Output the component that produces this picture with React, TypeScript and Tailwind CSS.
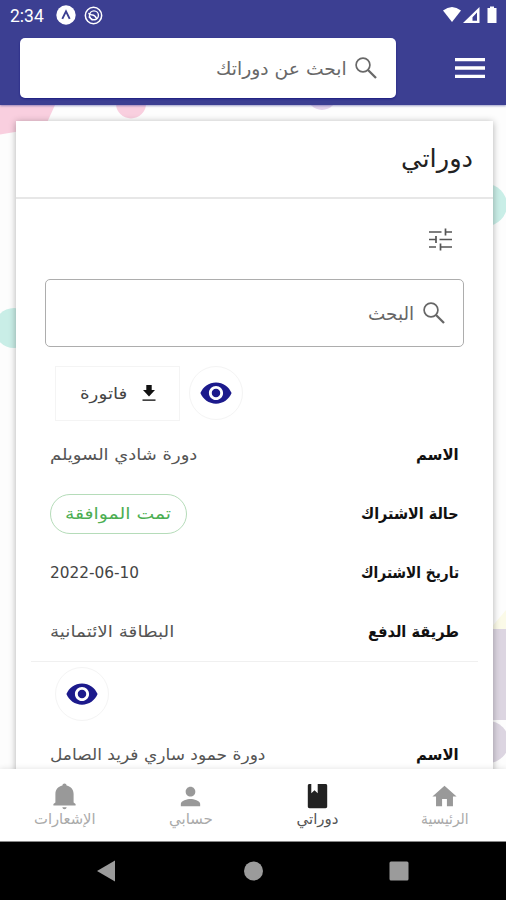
import { useLayoutEffect, useRef, useState } from "react";
import type { ReactNode } from "react";
import { MdHome, MdMenu, MdPerson, MdVisibility } from "react-icons/md";

/** A single line of text condensed or widened to a fixed width. */
function Fit({ w, className = "", children }: { w: number; className?: string; children: ReactNode }) {
  const ref = useRef<HTMLSpanElement>(null);
  const [scale, setScale] = useState(1);
  useLayoutEffect(() => {
    if (ref.current) setScale(w / ref.current.offsetWidth);
  }, [w]);
  return (
    <span className={`flex shrink-0 justify-start ${className}`} style={{ width: w }}>
      <span ref={ref} className="shrink-0 origin-right whitespace-nowrap" style={{ transform: `scaleX(${scale})` }}>
        {children}
      </span>
    </span>
  );
}

function SearchIcon({ className }: { className: string }) {
  return (
    <svg className={className} viewBox="0 0 22 22" fill="none" stroke="currentColor">
      <circle cx="8" cy="8" r="6.900" strokeWidth="1.700" />
      <path d="m13 13 8 8" strokeWidth="2.300" />
    </svg>
  );
}

function TuneIcon() {
  return (
    <svg className="h-[23px] w-[23px] text-[#555]" viewBox="0 0 23 23" fill="none" stroke="currentColor" strokeWidth="1.700">
      <path d="M0 4h12.500M16.500 4H23M16.500 .5v7M0 11.500h7M7 8v7M10.500 11.500H23M0 19h7M11.500 19H23M11.500 15.500v7" />
    </svg>
  );
}

function BellIcon({ className }: { className: string }) {
  return (
    <svg className={className} viewBox="0 0 29 29" fill="currentColor">
      <path d="M14.500 1.500c1.200 0 2 .8 2.100 2.100 4.600 1 7 4.300 7 8.400v8.400l2 1.600v1.500H3.400V22l2-1.600V12c0-4.100 2.400-7.400 7-8.400.1-1.300.9-2.100 2.100-2.100ZM12.300 25.300h4.400c-.3 1.300-1 2-2.200 2s-1.900-.7-2.200-2Z" />
    </svg>
  );
}

function BookIcon({ className }: { className: string }) {
  return (
    <svg className={className} viewBox="0 0 29 29" fill="currentColor">
      <path d="M6.500 2h1.800v9.300l3.200-3 3.200 3V2h7.800c1 0 1.700.7 1.700 1.700v20.800c0 1-.7 1.700-1.700 1.700h-16c-1 0-1.700-.7-1.700-1.700V3.700C4.800 2.700 5.500 2 6.500 2Z" />
    </svg>
  );
}

function StatusBar() {
  return (
    <div dir="ltr" className="flex h-[30px] items-center justify-between pl-[10px] pr-[8px] text-white">
      <div className="flex items-center">
        <span className="w-[46px] pt-[3px] font-[Roboto,sans-serif] text-[17.5px] leading-none">2:34</span>
        <svg className="size-5" viewBox="0 0 20 20">
          <circle cx="10" cy="10" r="9.7" fill="#fff" />
          <path d="M6.3 13.8 10 6.4l3.7 7.4" fill="none" stroke="#3c3f92" strokeWidth="1.9" />
        </svg>
        <svg className="ml-2 size-[19px]" viewBox="0 0 20 20" fill="none" stroke="#fff">
          <circle cx="10" cy="10" r="8.600" strokeWidth="1.600" />
          <circle cx="10.500" cy="9.800" r="4.700" strokeWidth="1.500" />
          <path d="M4.500 8c2 0 2.500 1.500 4.500 1.500S12 11 13.500 13.500M5 11l4 4" strokeWidth="1.600" />
        </svg>
      </div>
      <svg className="h-[18px] w-[56px]" viewBox="0 0 56 18" fill="#fff">
        <path d="M1 4.500Q10 -2.500 19 4.500L10 16Z" />
        <path fillRule="evenodd" d="M21 17 37.500 1v16ZM30.500 14.800H35V6.500l-4.500 4.700Z" />
        <path d="M45.500 2H48V.5h4V2h2.500v15h-9Z" />
      </svg>
    </div>
  );
}

function Header() {
  return (
    <header className="z-10 h-[105px] shrink-0 bg-[#3c3f92] shadow-[0_1px_2px_#3c3f9280]">
      <StatusBar />
      <div className="flex items-center pr-[16px] pt-[8px]">
        <MdMenu className="size-[40px] shrink-0 text-white" />
        <div className="mr-[54px] flex h-[60px] w-[376px] items-center rounded-[5px] bg-white pr-[19px] text-[#686868] shadow-[0_1px_2px_#1c1c80]">
          <SearchIcon className="size-[22px]" />
          <Fit w={131} className="mr-[8px] text-[18px]">ابحث عن دوراتك</Fit>
        </div>
      </div>
    </header>
  );
}

function Backdrop() {
  return (
    <svg className="absolute inset-0 h-[664px] w-[506px]" viewBox="0 105 506 664">
      <path d="M0 105H55L45 127 0 134.500Z" fill="#f9cfdf" />
      <circle cx="131" cy="103.500" r="15" fill="#f9cfdf" />
      <circle cx="322" cy="95" r="15" fill="#e5d4eb" />
      <circle cx="486" cy="205" r="21" fill="#c9eee7" />
      <circle cx="14" cy="328" r="20" fill="#c9eee7" />
      <path d="M506 610 490 629h16Z" fill="#fbfae8" />
      <path d="M490 629h16v91h-16Z" fill="#dcd5e1" />
      <circle cx="488" cy="742" r="21" fill="#dcd5e1" />
    </svg>
  );
}

function ViewButton() {
  return (
    <button className="flex size-[54px] items-center justify-center rounded-full border border-[#f4f4f4] text-[#1c1a8c]">
      <MdVisibility className="size-[34px]" />
    </button>
  );
}

function Row({ label, labelWidth, children }: { label: string; labelWidth: number; children: ReactNode }) {
  return (
    <div className="flex h-[58.800px] items-center justify-between pl-[34px] pr-[34px]">
      <Fit w={labelWidth} className="text-[16px] font-bold text-[#111]">{label}</Fit>
      {children}
    </div>
  );
}

function CourseCard() {
  return (
    <main className="relative mr-[13px] h-[660px] w-[477px] bg-white shadow-[0_1px_7px_#00000050]">
      <h1 className="flex h-[78px] items-center border-b-2 border-[#e7e7e7] pr-[20px] text-[#222]">
        <Fit w={72} className="text-[25px]">دوراتي</Fit>
      </h1>
      <div className="flex h-[80px] items-center pr-[41px]">
        <TuneIcon />
      </div>
      <div className="mr-[29px] flex h-[68px] w-[419px] items-center rounded-[5px] border-[1.500px] border-[#adadad] pr-[18px] text-[#666]">
        <SearchIcon className="size-[22px]" />
        <Fit w={46} className="mr-[9px] text-[18px]">البحث</Fit>
      </div>
      <div dir="ltr" className="mt-[19px] flex gap-[9px] pl-[39px]">
        <button dir="rtl" className="flex h-[55px] w-[125px] items-center border border-[#f4f4f4] pr-[23px] text-[#444]">
          <svg className="h-[17px] w-[14px] text-[#111]" viewBox="0 0 14 17">
            <path d="M4.300 0h5.400v5H13l-6 6.500L1 5h3.300Z" fill="currentColor" />
            <path d="M.5 14.300h13v1.700H.5Z" fill="#444" />
          </svg>
          <Fit w={47} className="mr-[15px] text-[16px]">فاتورة</Fit>
        </button>
        <ViewButton />
      </div>
      <div className="mt-[5px]">
        <Row label="الاسم" labelWidth={43}><Fit w={147} className="text-[16px] text-[#555]">دورة شادي السويلم</Fit></Row>
        <Row label="حالة الاشتراك" labelWidth={98}>
          <div className="flex h-[40px] w-[137px] items-center justify-center rounded-full border border-[#b5dcb9] text-[#4cae52]">
            <Fit w={106} className="text-[16px]">تمت الموافقة</Fit>
          </div>
        </Row>
        <Row label="تاريخ الاشتراك" labelWidth={98}><Fit w={89} className="text-[16px] text-[#444]">2022-06-10</Fit></Row>
        <Row label="طريقة الدفع" labelWidth={91}><Fit w={124} className="text-[16px] text-[#555]">البطاقة الائتمانية</Fit></Row>
      </div>
      <div className="mx-[15px] border-t border-[#f0f0f0]" />
      <div dir="ltr" className="mt-[5px] pl-[39px]"><ViewButton /></div>
      <div className="mt-[4px]">
        <Row label="الاسم" labelWidth={43}><Fit w={215} className="text-[16px] text-[#555]">دورة حمود ساري فريد الصامل</Fit></Row>
      </div>
    </main>
  );
}

const tabs = [
  { label: "الرئيسية", w: 48, Icon: MdHome, active: false },
  { label: "دوراتي", w: 42, Icon: BookIcon, active: true },
  { label: "حسابي", w: 44, Icon: MdPerson, active: false },
  { label: "الإشعارات", w: 62, Icon: BellIcon, active: false },
];

function BottomNav() {
  return (
    <nav className="z-10 flex h-[73px] shrink-0 border-b border-[#888] bg-white pl-px shadow-[0_-1px_5px_#00000018]">
      {tabs.map(({ label, w, Icon, active }) => (
        <div key={label} className={`flex w-[126.670px] shrink-0 flex-col items-center pt-[13px] first:-mr-[1.500px] ${active ? "text-[#222]" : "text-[#999]"}`}>
          <Icon className="size-[29px]" />
          <Fit w={w} className={`-mt-[3px] text-[15px] leading-[22px] ${active ? "text-[#555]" : "text-[#aaa]"}`}>{label}</Fit>
        </div>
      ))}
    </nav>
  );
}

export default function App() {
  return (
    <div dir="rtl" className="flex h-[900px] w-[506px] flex-col overflow-hidden bg-white font-['DejaVu_Sans',sans-serif]">
      <Header />
      <div className="relative h-[664px] shrink-0 overflow-hidden bg-[#fdfdfd] pt-[16px]">
        <Backdrop />
        <CourseCard />
      </div>
      <BottomNav />
      <div dir="ltr" className="flex h-[58px] items-center bg-black pl-[96px]">
        <svg className="h-[22px] w-[314px]" viewBox="0 0 314 22" fill="#9b9b9b">
          <path d="M1 11 19 .5v21Z" />
          <circle cx="157.500" cy="11" r="9.500" />
          <rect x="293.500" y="1.500" width="19" height="19" rx="1.500" />
        </svg>
      </div>
    </div>
  );
}
